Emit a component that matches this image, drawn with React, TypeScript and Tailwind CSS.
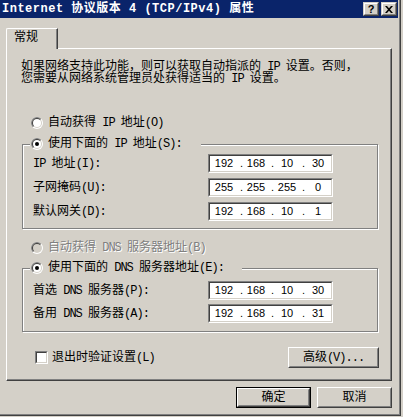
import React from 'react';

function T({ s }: { s: string }) {
  const parts = s.split(/([\x20-\x7e]+)/).filter(Boolean);
  return (
    <>
      {parts.map((p, i) =>
        /^[\x20-\x7e]+$/.test(p) ? (
          <span key={i} className="tracking-[-1px]">{p}</span>
        ) : (
          <span key={i}>{p}</span>
        )
      )}
    </>
  );
}

function Radio({ checked, disabled }: { checked?: boolean; disabled?: boolean }) {
  return (
    <svg width="12" height="12" viewBox="0 0 12 12" className="shrink-0">
      <circle cx="6" cy="6" r="6" fill="#ffffff" />
      <path d="M1.757 10.243 A6 6 0 0 1 10.243 1.757 Z" fill="#808080" />
      <circle cx="6" cy="6" r="5" fill="#d4d0c8" />
      <path d="M2.464 9.536 A5 5 0 0 1 9.536 2.464 Z" fill="#404040" />
      <circle cx="6" cy="6" r="4" fill={disabled ? '#d4d0c8' : '#ffffff'} />
      {checked && <circle cx="6" cy="6" r="2" fill="#000000" />}
    </svg>
  );
}

function Sunken({ className, children }: { className?: string; children?: React.ReactNode }) {
  return (
    <div className={`border border-t-[#808080] border-l-[#808080] border-r-white border-b-white ${className ?? ''}`}>
      <div className="w-full h-full border border-t-[#404040] border-l-[#404040] border-r-[#d4d0c8] border-b-[#d4d0c8] bg-white">
        {children}
      </div>
    </div>
  );
}

function Button({ label, isDefault, className }: { label: string; isDefault?: boolean; className?: string }) {
  const inner = (
    <div className="w-full h-full border border-t-white border-l-white border-r-[#404040] border-b-[#404040]">
      <div className="w-full h-full border border-t-[#d4d0c8] border-l-[#d4d0c8] border-r-[#808080] border-b-[#808080] flex items-center justify-center leading-[12px] text-[12px] text-black">
        <T s={label} />
      </div>
    </div>
  );
  if (isDefault) {
    return <div className={`border border-black ${className ?? ''}`}>{inner}</div>;
  }
  return <div className={className}>{inner}</div>;
}

function CaptionButton({ children }: { children: React.ReactNode }) {
  return (
    <div className="w-[16px] h-[14px] border border-t-[#d4d0c8] border-l-[#d4d0c8] border-r-[#404040] border-b-[#404040]">
      <div className="w-full h-full border border-t-white border-l-white border-r-[#808080] border-b-[#808080] bg-[#d4d0c8] flex items-center justify-center">
        {children}
      </div>
    </div>
  );
}

function IpBox({ v }: { v: string[] }) {
  return (
    <Sunken className="w-[125px] h-[19px]">
      <div className="flex items-center h-full text-[11px] leading-[13px] text-black [font-family:'Liberation_Sans',Arial,sans-serif]">
        <span className="w-[28px] text-center">{v[0]}</span>
        <span className="w-[5px] text-right">.</span>
        <span className="w-[26px] text-center">{v[1]}</span>
        <span className="w-[5px] text-right">.</span>
        <span className="w-[26px] text-center">{v[2]}</span>
        <span className="w-[5px] text-right">.</span>
        <span className="w-[26px] text-center">{v[3]}</span>
      </div>
    </Sunken>
  );
}

function Row({ label, v }: { label: string; v: string[] }) {
  return (
    <div className="flex items-center h-[19px]">
      <div className="w-[175px] leading-[12px]">
        <T s={label} />
      </div>
      <IpBox v={v} />
    </div>
  );
}

export default function App() {
  return (
    <div className="w-[403px] h-[417px] bg-[#d4d0c8] overflow-hidden text-[12px] text-black [font-family:'Liberation_Mono','Noto_Sans_CJK_SC',monospace]">
      <div className="w-[401px] h-[416px] border-r border-b border-[#404040]">
        <div className="w-full h-full border-r border-b border-[#808080] bg-[#d4d0c8] flex flex-col">
          {/* Title bar */}
          <div className="h-[18px] mr-px bg-[#0a246a] flex items-center pl-[2px] pr-px">
            <div className="text-white font-bold leading-[14px] text-[12px] tracking-[0.5px] whitespace-nowrap">
              Internet 协议版本 4 (TCP/IPv4) 属性
            </div>
            <div className="ml-auto flex gap-[2px]">
              <CaptionButton>
                <span className="text-[11px] leading-[10px] font-bold text-black [font-family:'Liberation_Sans',Arial,sans-serif]">?</span>
              </CaptionButton>
              <CaptionButton>
                <svg width="8" height="7" viewBox="0 0 8 7">
                  <path d="M0 0h2l2 2.2L6 0h2L5 3.5L8 7H6L4 4.8L2 7H0l3-3.5Z" fill="#000" />
                </svg>
              </CaptionButton>
            </div>
          </div>

          {/* Tab */}
          <div className="mt-[10px] ml-[6px] relative z-10 -mb-px w-[52px] h-[21px] bg-[#d4d0c8] border-t border-l border-white rounded-tl-[2px] border-r border-r-[#404040]">
            <div className="h-full border-r border-[#808080] pl-[7px] pt-[3px] leading-[12px]">常规</div>
          </div>

          {/* Panel */}
          <div className="ml-[6px] w-[386px] h-[333px] border-t border-l border-white border-r border-b border-r-[#404040] border-b-[#404040]">
            <div className="w-full h-full border-r border-b border-[#808080] flex flex-col">
              <div className="pt-[12px] pl-[14px] leading-[12px] whitespace-nowrap">
                <div><T s="如果网络支持此功能，则可以获取自动指派的 IP 设置。否则，" /></div>
                <div><T s="您需要从网络系统管理员处获得适当的 IP 设置。" /></div>
              </div>

              <div className="mt-[30px] ml-[24px] h-[16px] flex items-center gap-[5px] leading-[12px]">
                <Radio />
                <span><T s="自动获得 IP 地址(O)" /></span>
              </div>

              {/* Group 1 */}
              <div className="relative mt-[13px] ml-[15px] w-[356px] h-[85px] border border-[#808080] shadow-[inset_1px_1px_0_#fff,1px_1px_0_#fff] pt-[9px] pl-[10px]">
                <div className="absolute -top-[9px] left-[7px] w-[171px] h-[16px] bg-[#d4d0c8] pl-px flex items-center gap-[5px] leading-[12px]">
                  <Radio checked />
                  <span><T s="使用下面的 IP 地址(S):" /></span>
                </div>
                <div className="flex flex-col gap-[5px]">
                  <Row label="IP 地址(I):" v={['192', '168', '10', '30']} />
                  <Row label="子网掩码(U):" v={['255', '255', '255', '0']} />
                  <Row label="默认网关(D):" v={['192', '168', '10', '1']} />
                </div>
              </div>

              <div className="mt-[11px] ml-[24px] h-[16px] flex items-center gap-[5px] leading-[12px]">
                <Radio disabled />
                <span className="text-[#808080] [text-shadow:1px_1px_0_#fff]"><T s="自动获得 DNS 服务器地址(B)" /></span>
              </div>

              {/* Group 2 */}
              <div className="relative mt-[12px] ml-[15px] w-[356px] h-[64px] border border-[#808080] shadow-[inset_1px_1px_0_#fff,1px_1px_0_#fff] pt-[12px] pl-[10px]">
                <div className="absolute -top-[9px] left-[7px] w-[212px] h-[16px] bg-[#d4d0c8] pl-px flex items-center gap-[5px] leading-[12px]">
                  <Radio checked />
                  <span><T s="使用下面的 DNS 服务器地址(E):" /></span>
                </div>
                <div className="flex flex-col gap-[4px]">
                  <Row label="首选 DNS 服务器(P):" v={['192', '168', '10', '30']} />
                  <Row label="备用 DNS 服务器(A):" v={['192', '168', '10', '31']} />
                </div>
              </div>

              <div className="mt-[15px] h-[21px] flex items-center pl-[28px] pr-[11px]">
                <Sunken className="w-[13px] h-[13px]" />
                <span className="ml-[4px] leading-[12px]"><T s="退出时验证设置(L)" /></span>
                <Button label="高级(V)..." className="ml-auto w-[91px] h-[21px]" />
              </div>
            </div>
          </div>

          {/* Bottom buttons */}
          <div className="mt-[6px] flex justify-end gap-[6px] pr-[7px]">
            <Button label="确定" isDefault className="w-[75px] h-[21px]" />
            <Button label="取消" className="w-[75px] h-[21px]" />
          </div>
        </div>
      </div>
    </div>
  );
}
